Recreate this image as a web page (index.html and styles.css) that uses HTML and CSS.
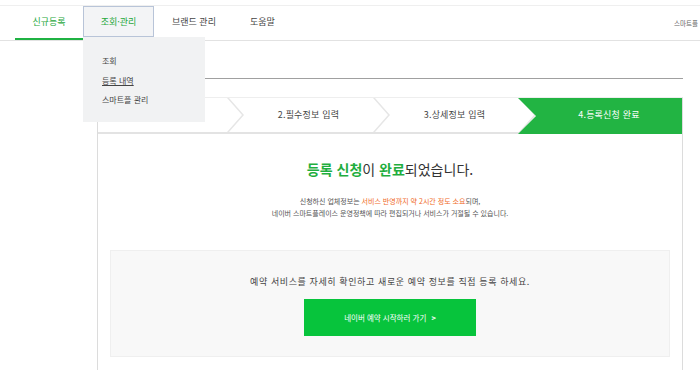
FILE: index.html
```html
<!DOCTYPE html>
<html lang="ko">
<head>
    <meta charset="UTF-8">
    <title>스마트플레이스 - 등록 완료</title>
    <link rel="stylesheet" href="styles.css">
</head>
<body>
    <div class="header">
        <ul class="gnb">
            <li class="gnb-item on">신규등록</li>
            <li class="gnb-item hover">조회·관리
                <ul class="sub-menu">
                    <li>조회</li>
                    <li class="line">등록 내역</li>
                    <li>스마트플 관리</li>
                </ul>
            </li>
            <li class="gnb-item">브랜드 관리</li>
            <li class="gnb-item">도움말</li>
        </ul>
        <div class="util">스마트플</div>
    </div>

    <div class="container">
        <div class="page-title"></div>

        <div class="content-box">
            <ol class="steps">
                <li class="step">1.기본정보 입력</li>
                <li class="step">2.필수정보 입력</li>
                <li class="step">3.상세정보 입력</li>
                <li class="step current">4.등록신청 완료</li>
            </ol>

            <h2 class="done-title"><em>등록 신청</em>이 <em>완료</em>되었습니다.</h2>
            <p class="done-desc">
                신청하신 업체정보는 <span class="point">서비스 반영까지 약 2시간 정도 소요</span>되며,<br>
                네이버 스마트플레이스 운영정책에 따라 편집되거나 서비스가 거절될 수 있습니다.
            </p>

            <div class="booking-box">
                <p>예약 서비스를 자세히 확인하고 새로운 예약 정보를 직접 등록 하세요.</p>
                <a class="btn-green">네이버 예약 시작하러 가기 <span class="arr">&gt;</span></a>
            </div>
        </div>
    </div>
</body>
</html>
```

FILE: styles.css
```css
body {
    margin: 0;
    padding-top: 5px;
    font-family: "Noto Sans CJK KR", "Noto Sans", sans-serif;
    color: #333;
    overflow: hidden;
    background: #fff;
}
ul, ol, p, h2 {
    margin: 0;
    padding: 0;
    list-style: none;
}

.header {
    display: flex;
    justify-content: space-between;
    align-items: center;
    height: 34px;
    border-top: 1px solid #efefef;
    border-bottom: 1px solid #e2e2e2;
    padding-left: 15px;
    padding-right: 2px;
}
.gnb {
    display: flex;
    height: 100%;
}
.gnb-item {
    position: relative;
    box-sizing: border-box;
    height: 34px;
    line-height: 32px;
    padding: 0 15px;
    font-size: 9px;
    color: #444;
}
.gnb-item.on {
    color: #1ea83c;
    border-bottom: 2px solid #1fb243;
    width: 68px;
    text-align: center;
}
.gnb-item.hover {
    color: #1ea83c;
    height: 31px;
    line-height: 29px;
    width: 71px;
    text-align: center;
    padding: 0;
    background: #f3f4f6;
    border: 1px solid #b8c4d8;
}
.gnb-item:nth-child(3) {
    padding: 0 18px;
}
.gnb-item:nth-child(4) {
    padding: 0 16px;
}

.sub-menu {
    position: absolute;
    top: 30px;
    left: -1px;
    z-index: 10;
    width: 122px;
    height: 85px;
    box-sizing: border-box;
    padding: 14px 0 0 19px;
    background: #f1f2f3;
    text-align: left;
}
.sub-menu li {
    font-size: 8px;
    line-height: 19.5px;
    color: #444;
}
.sub-menu li.line {
    text-decoration: underline;
}

.util {
    font-size: 6.5px;
    color: #666;
    white-space: nowrap;
}

.container {
    margin-left: 97px;
    width: 586px;
}
.page-title {
    height: 37px;
    border-bottom: 1px solid #a0a0a0;
    margin-bottom: 18px;
}

.content-box {
    box-sizing: border-box;
    border-left: 1px solid #dcdcdc;
    border-right: 1px solid #dcdcdc;
    border-top: 1px solid #eee;
    height: 273px;
}
.steps {
    display: flex;
    height: 36px;
}
.step {
    position: relative;
    flex: 0 0 25%;
    box-sizing: border-box;
    padding-right: 17px;
    font-size: 9px;
    letter-spacing: 0.2px;
    line-height: 34px;
    color: #444;
    text-align: center;
    box-shadow: inset 0 -2px #e3e3e3;
}
.step::after {
    content: "";
    position: absolute;
    top: 0;
    right: 0;
    width: 17px;
    height: 34px;
    background: #e6e6e6;
    clip-path: polygon(0 0, 2px 0, 100% 50%, 2px 100%, 0 100%, calc(100% - 2px) 50%);
}
.step.current {
    padding-right: 0;
    color: #fff;
    background: #22b443;
    box-shadow: none;
}
.step.current::after {
    right: auto;
    left: -18px;
    width: 18px;
    height: 36px;
    background: #22b443;
    clip-path: polygon(0 0, 100% 0, 100% 100%, 0 100%, 100% 50%);
}

.done-title {
    margin-top: 25px;
    text-align: center;
    font-size: 14px;
    line-height: 20px;
    font-weight: normal;
    color: #333;
}
.done-title em {
    font-style: normal;
    font-weight: bold;
    color: #1fae3e;
}
.done-desc {
    margin-top: 16px;
    text-align: center;
    font-size: 7px;
    line-height: 12px;
    color: #555;
}
.point {
    color: #f06a1f;
}

.booking-box {
    margin: 31px 12px 0 12px;
    height: 107px;
    box-sizing: border-box;
    border: 1px solid #efefef;
    background: #f8f8f8;
    padding-top: 24px;
    text-align: center;
}
.booking-box p {
    font-size: 9px;
    line-height: 14px;
    color: #444;
    letter-spacing: 0.6px;
}
.btn-green {
    display: block;
    width: 172px;
    height: 37px;
    margin: 10px auto 0;
    background: #07c43c;
    color: #fff;
    font-size: 7.5px;
    line-height: 37px;
    cursor: pointer;
}
.btn-green .arr {
    margin-left: 3px;
    font-weight: bold;
}
```
